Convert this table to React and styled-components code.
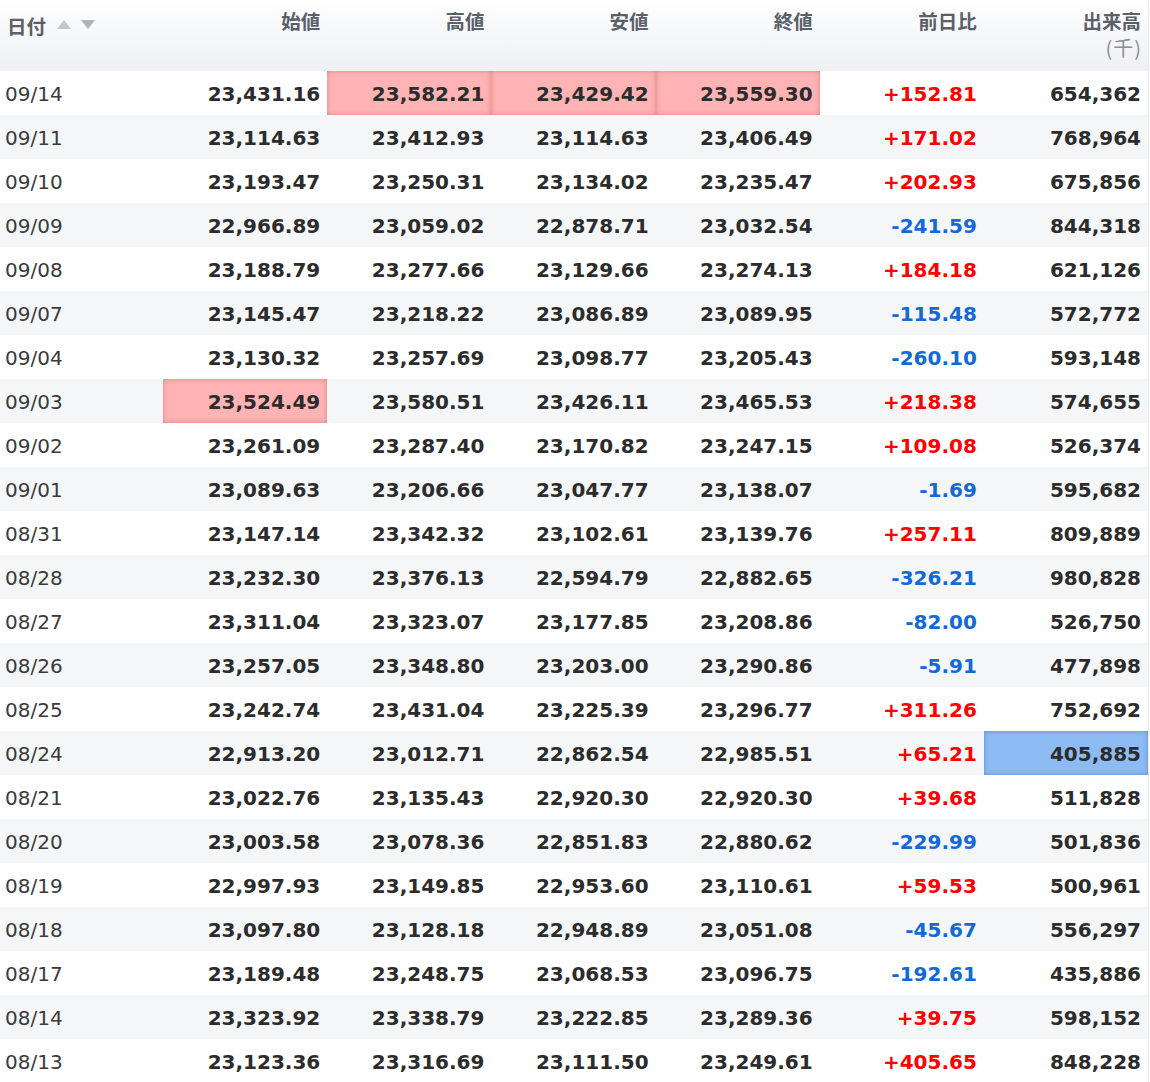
import React from 'react';
import styled, { createGlobalStyle } from 'styled-components';

const GlobalStyle = createGlobalStyle`
  body {
    margin: 0;
    background: #ffffff;
    font-family: "DejaVu Sans", Verdana, sans-serif;
  }
`;

const Wrapper = styled.div`
  width: 1148px;
  border-right: 1px solid #e6e8ec;
  overflow: hidden;
`;

const Table = styled.table`
  width: 1148px;
  border-collapse: collapse;
  table-layout: fixed;
`;

const HeadRow = styled.tr`
  height: 71px;
  background: linear-gradient(to bottom, #ffffff 0%, #f6f7f9 50%, #eef0f3 100%);
`;

const Th = styled.th`
  width: ${(p) => p.$w || 164}px;
  vertical-align: top;
  text-align: ${(p) => (p.$left ? 'left' : 'right')};
  padding: ${(p) => (p.$left ? '13px 0 0 7px' : '8px 7px 0 0')};
  font-family: "Noto Sans CJK JP", "DejaVu Sans", sans-serif;
  font-weight: 700;
  font-size: 19.5px;
  line-height: 26px;
  color: #5a606a;
  box-sizing: border-box;
`;

const Label = styled.div`
  height: 26px;
`;

const Sub = styled.div`
  margin-top: 2px;
  font-weight: 400;
  color: #8a8f96;
  font-size: 20px;
  line-height: 24px;
  letter-spacing: 1px;
  margin-right: -1px;
`;

const SortIcons = styled.span`
  display: inline-flex;
  gap: 8px;
  margin-left: 10px;
  vertical-align: 4px;
`;

const Row = styled.tr`
  height: 44px;
  background: ${(p) => (p.$alt ? '#f5f6f8' : '#ffffff')};
`;

const DateCell = styled.td`
  padding: 1px 0 0 5px;
  font-size: 20px;
  color: #3a3a3a;
  text-align: left;
  white-space: nowrap;
`;

const tone = {
  up: '#ff0000',
  down: '#1469d6',
};

const highlight = {
  pink: 'background: #ffb3b4; box-shadow: inset 0 0 5px rgba(160, 60, 60, 0.4);',
  blue: 'background: #8dbbf3; box-shadow: inset 0 0 5px rgba(30, 70, 140, 0.4);',
};

const NumCell = styled.td`
  padding: 2px 7px 0 0;
  font-size: 20px;
  font-weight: 700;
  text-align: right;
  white-space: nowrap;
  color: ${(p) => tone[p.$tone] || '#2c2c2c'};
  ${(p) => (p.$hl ? highlight[p.$hl] : '')}
`;

const rows = [
  ['09/14', '23,431.16', '23,582.21', '23,429.42', '23,559.30', '+152.81', '654,362', { 2: 'pink', 3: 'pink', 4: 'pink' }],
  ['09/11', '23,114.63', '23,412.93', '23,114.63', '23,406.49', '+171.02', '768,964'],
  ['09/10', '23,193.47', '23,250.31', '23,134.02', '23,235.47', '+202.93', '675,856'],
  ['09/09', '22,966.89', '23,059.02', '22,878.71', '23,032.54', '-241.59', '844,318'],
  ['09/08', '23,188.79', '23,277.66', '23,129.66', '23,274.13', '+184.18', '621,126'],
  ['09/07', '23,145.47', '23,218.22', '23,086.89', '23,089.95', '-115.48', '572,772'],
  ['09/04', '23,130.32', '23,257.69', '23,098.77', '23,205.43', '-260.10', '593,148'],
  ['09/03', '23,524.49', '23,580.51', '23,426.11', '23,465.53', '+218.38', '574,655', { 1: 'pink' }],
  ['09/02', '23,261.09', '23,287.40', '23,170.82', '23,247.15', '+109.08', '526,374'],
  ['09/01', '23,089.63', '23,206.66', '23,047.77', '23,138.07', '-1.69', '595,682'],
  ['08/31', '23,147.14', '23,342.32', '23,102.61', '23,139.76', '+257.11', '809,889'],
  ['08/28', '23,232.30', '23,376.13', '22,594.79', '22,882.65', '-326.21', '980,828'],
  ['08/27', '23,311.04', '23,323.07', '23,177.85', '23,208.86', '-82.00', '526,750'],
  ['08/26', '23,257.05', '23,348.80', '23,203.00', '23,290.86', '-5.91', '477,898'],
  ['08/25', '23,242.74', '23,431.04', '23,225.39', '23,296.77', '+311.26', '752,692'],
  ['08/24', '22,913.20', '23,012.71', '22,862.54', '22,985.51', '+65.21', '405,885', { 6: 'blue' }],
  ['08/21', '23,022.76', '23,135.43', '22,920.30', '22,920.30', '+39.68', '511,828'],
  ['08/20', '23,003.58', '23,078.36', '22,851.83', '22,880.62', '-229.99', '501,836'],
  ['08/19', '22,997.93', '23,149.85', '22,953.60', '23,110.61', '+59.53', '500,961'],
  ['08/18', '23,097.80', '23,128.18', '22,948.89', '23,051.08', '-45.67', '556,297'],
  ['08/17', '23,189.48', '23,248.75', '23,068.53', '23,096.75', '-192.61', '435,886'],
  ['08/14', '23,323.92', '23,338.79', '23,222.85', '23,289.36', '+39.75', '598,152'],
  ['08/13', '23,123.36', '23,316.69', '23,111.50', '23,249.61', '+405.65', '848,228'],
];

const heads = ['始値', '高値', '安値', '終値', '前日比'];

function Arrow({ up, color }) {
  return (
    <svg width="16" height="11" viewBox="0 0 16 11">
      <path d={up ? 'M8 1 L15 10 L1 10 Z' : 'M1 1 L15 1 L8 10 Z'} fill={color} />
    </svg>
  );
}

export default function App() {
  return (
    <Wrapper>
      <GlobalStyle />
      <Table>
        <thead>
          <HeadRow>
            <Th $left $w={163}>
              日付
              <SortIcons>
                <Arrow up color="#c4c7cc" />
                <Arrow color="#b0b3b8" />
              </SortIcons>
            </Th>
            {heads.map((h) => (
              <Th key={h}>{h}</Th>
            ))}
            <Th>
              <Label>出来高</Label>
              <Sub>(千)</Sub>
            </Th>
          </HeadRow>
        </thead>
        <tbody>
          {rows.map((r, i) => {
            const hl = r[7] || {};
            return (
              <Row key={r[0]} $alt={i % 2 === 1}>
                <DateCell>{r[0]}</DateCell>
                {r.slice(1, 7).map((v, j) => (
                  <NumCell
                    key={j}
                    $hl={hl[j + 1]}
                    $tone={j === 4 ? (v.startsWith('+') ? 'up' : 'down') : undefined}
                  >
                    {v}
                  </NumCell>
                ))}
              </Row>
            );
          })}
        </tbody>
      </Table>
    </Wrapper>
  );
}
